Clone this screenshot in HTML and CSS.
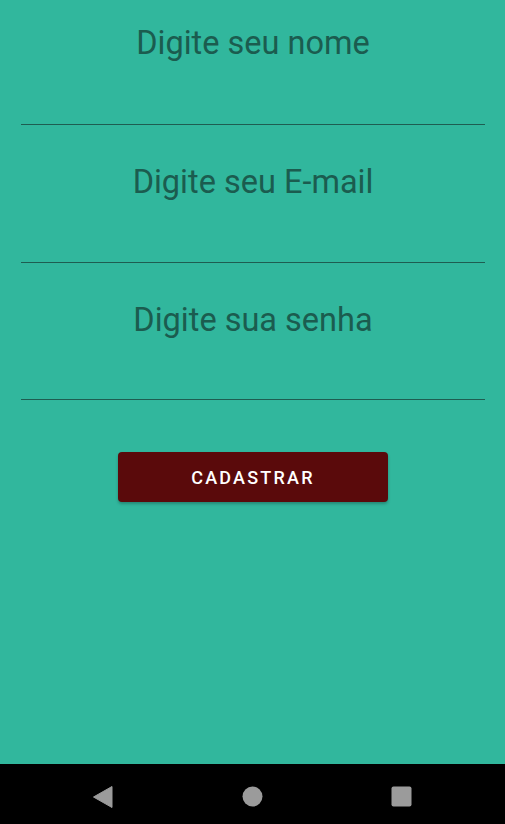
FILE: index.html
```html
<!DOCTYPE html>
<html lang="pt">
<head>
<meta charset="utf-8">
<title>Cadastro</title>
<link rel="stylesheet" href="styles.css">
</head>
<body>
<div class="screen">
  <main class="form">
    <div class="field"><span class="label">Digite seu nome</span></div>
    <div class="field"><span class="label">Digite seu E-mail</span></div>
    <div class="field"><span class="label">Digite sua senha</span></div>
    <div class="actions">
      <button class="btn" type="button">CADASTRAR</button>
    </div>
  </main>
  <nav class="navbar">
    <svg class="nav-icon" width="20" height="22" viewBox="0 0 20 22"><path d="M19 0.5 L19 21.5 L0.5 11 Z" fill="#9b9b9b" stroke="#9b9b9b" stroke-linejoin="round" stroke-width="1"/></svg>
    <svg class="nav-icon" width="21" height="21" viewBox="0 0 21 21"><circle cx="10.5" cy="10.5" r="10" fill="#9b9b9b"/></svg>
    <svg class="nav-icon" width="21" height="21" viewBox="0 0 21 21"><rect x="0.5" y="0.5" width="20" height="20" rx="2" fill="#9b9b9b"/></svg>
  </nav>
</div>
</body>
</html>
```

FILE: styles.css
```css
html, body {
  margin: 0;
  padding: 0;
}
body {
  font-family: Roboto, "Noto Sans", sans-serif;
  background: #31b79d;
}
.screen {
  width: 505px;
  height: 824px;
  display: flex;
  flex-direction: column;
  overflow: hidden;
}
.form {
  flex: 1;
  display: flex;
  flex-direction: column;
  padding: 0 20px 0 21px;
}
.field {
  height: 125px;
  box-sizing: border-box;
  padding-top: 23px;
  border-bottom: 1px solid #1e5d51;
  display: flex;
  justify-content: center;
  align-items: flex-start;
}
.field + .field {
  height: 138px;
  padding-top: 37px;
}
.field + .field + .field {
  height: 137px;
}
.label {
  font-size: 32.5px;
  line-height: 40px;
  color: #1b5c4f;
  white-space: nowrap;
}
.actions {
  display: flex;
  justify-content: center;
  padding-top: 52px;
}
.btn {
  width: 270px;
  height: 50px;
  border: none;
  border-radius: 4px;
  background: #5a0a0b;
  color: #ffffff;
  font-family: Roboto, sans-serif;
  font-weight: 500;
  font-size: 18px;
  letter-spacing: 2.2px;
  box-shadow: 0 2px 3px rgba(0,0,0,0.25);
  padding: 0;
}
.navbar {
  height: 60px;
  box-sizing: border-box;
  background: #000;
  display: flex;
  align-items: center;
  justify-content: space-between;
  padding: 5px 93px 0 93px;
}
.nav-icon {
  display: block;
}
```
